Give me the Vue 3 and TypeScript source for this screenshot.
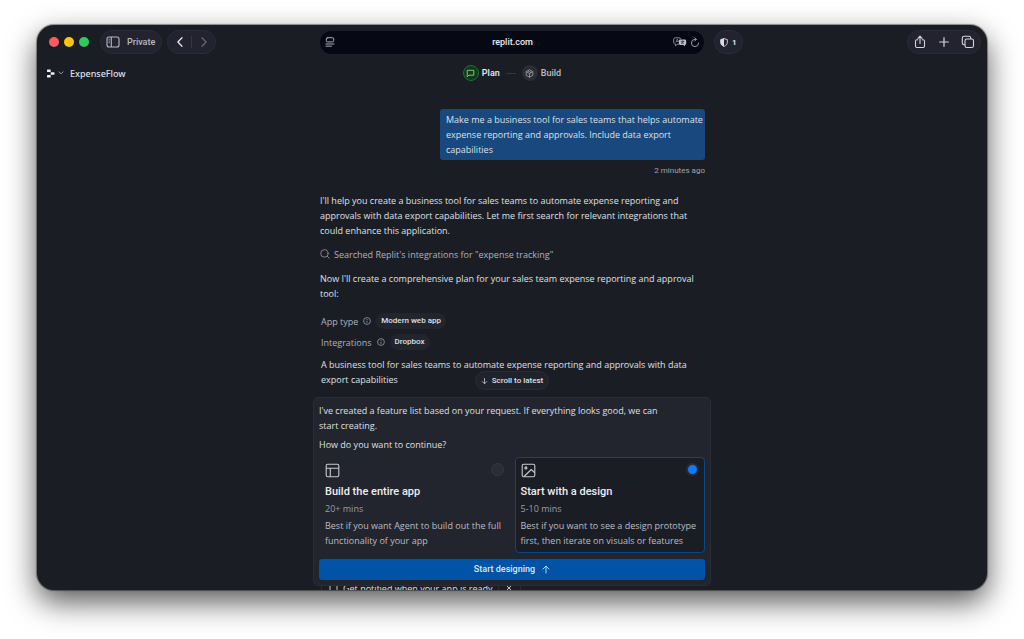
<script setup lang="ts">
import { ref } from 'vue'

interface Option {
  id: string
  title: string
  time: string
  text: string
}

const options: Option[] = [
  {
    id: 'app',
    title: 'Build the entire app',
    time: '20+ mins',
    text: 'Best if you want Agent to build out the full\nfunctionality of your app',
  },
  {
    id: 'design',
    title: 'Start with a design',
    time: '5-10 mins',
    text: 'Best if you want to see a design prototype\nfirst, then iterate on visuals or features',
  },
]
const choice = ref('design')

const facts = [
  { label: 'App type', value: 'Modern web app' },
  { label: 'Integrations', value: 'Dropbox' },
]

const request =
  'Make me a business tool for sales teams that helps automate\nexpense reporting and approvals. Include data export\ncapabilities'
const intro =
  "I'll help you create a business tool for sales teams to automate expense reporting and\napprovals with data export capabilities. Let me first search for relevant integrations that\ncould enhance this application."
const plan =
  "Now I'll create a comprehensive plan for your sales team expense reporting and approval\ntool:"
const summary =
  'A business tool for sales teams to automate expense reporting and approvals with data\nexport capabilities'
const prompt =
  "I've created a feature list based on your request. If everything looks good, we can\nstart creating."
</script>

<template>
  <div class="desktop">
    <div class="window">
      <header class="toolbar">
        <div class="side">
          <div class="lights">
            <span class="light red"></span>
            <span class="light yellow"></span>
            <span class="light green"></span>
          </div>
          <button class="pill private" type="button">
            <svg width="14" height="12" viewBox="0 0 14 12" fill="none" stroke="#b9bac3" stroke-width="1.1">
              <rect x="1" y="1" width="12" height="10" rx="2" />
              <path d="M5.3 1v10M2.6 3.3h1.2M2.6 5h1.2M2.6 6.7h1.2" />
            </svg>
            Private
          </button>
          <div class="pill nav">
            <button type="button" aria-label="Back">
              <svg width="8" height="12" viewBox="0 0 8 12" fill="none" stroke="#e4e4ea" stroke-width="1.3" stroke-linecap="round" stroke-linejoin="round">
                <path d="M6 1.7 1.9 6 6 10.3" />
              </svg>
            </button>
            <span class="rule"></span>
            <button type="button" aria-label="Forward">
              <svg width="8" height="12" viewBox="0 0 8 12" fill="none" stroke="#62636f" stroke-width="1.3" stroke-linecap="round" stroke-linejoin="round">
                <path d="M2 1.7 6.1 6 2 10.3" />
              </svg>
            </button>
          </div>
        </div>

        <div class="address">
          <svg width="10" height="10" viewBox="0 0 10 10" fill="none" stroke="#a9abb5" stroke-linecap="round">
            <rect x="1.3" y=".7" width="7.4" height="4.2" rx="1.2" />
            <path d="M1 7h8M1 9.2h5.5" />
          </svg>
          <span class="host">replit.com</span>
          <span class="tools">
            <svg width="14" height="10" viewBox="0 0 14 10" fill="none">
              <path d="M6 7.2H4.2L2.6 8.8V7.2C1.3 7 .7 6.4 .7 5.3V2.8C.7 1.4 1.3 .8 2.7 .8h3.2c1 0 1.7 .4 1.9 1.2" stroke="#9a9ba4" stroke-width=".9" />
              <path d="M2.8 5.5 4.3 2.2l1.2 2.4M3.3 4.5h1.7" stroke="#9a9ba4" stroke-width=".7" />
              <path d="M7.5 2.4h4c1.1 0 1.7 .6 1.7 1.7v2.2c0 1.1-.5 1.6-1.4 1.7v1.6L10.2 8H7.5c-1.1 0-1.7-.6-1.7-1.7V4.1c0-1.1 .6-1.7 1.7-1.7z" fill="#bfc0c8" />
              <path d="M7.7 4.3h3.6M9.5 3.5v.8M8.1 6.8c1.3-.5 2.2-1.3 2.5-2.5M8.4 4.9c.5 1 1.3 1.6 2.3 1.9" stroke="#0a0c16" stroke-width=".6" />
            </svg>
            <svg width="10" height="11" viewBox="0 0 10 11" fill="none" stroke="#9a9ba4" stroke-linecap="round" stroke-linejoin="round">
              <path d="M8.6 6a3.6 3.6 0 1 1-3.6-3.6h1.2M4.7 .8l1.7 1.6-1.7 1.7" />
            </svg>
          </span>
        </div>

        <div class="side end">
          <button class="pill shield" type="button" aria-label="Privacy report, 1 tracker">
            <svg width="8" height="9" viewBox="0 0 8 9" fill="none">
              <path d="M4 .6 7.3 1.6v3.1C7.3 6.4 5.9 7.6 4 8.4 2.1 7.6 .7 6.4 .7 4.7V1.6z" stroke="#dcdde3" stroke-width=".9" />
              <path d="M4 .6v7.8C2.1 7.6 .7 6.4 .7 4.7V1.6z" fill="#dcdde3" />
            </svg>
            1
          </button>
          <div class="pill actions">
            <button type="button" aria-label="Share">
              <svg width="12" height="14" viewBox="0 0 12 14" fill="none" stroke="#d5d6dd" stroke-width="1.1" stroke-linecap="round" stroke-linejoin="round">
                <path d="M3.8 4.8H2.9c-.9 0-1.4 .5-1.4 1.4v4.9c0 .9 .5 1.4 1.4 1.4h6.2c.9 0 1.4-.5 1.4-1.4V6.2c0-.9-.5-1.4-1.4-1.4h-.9M6 8.5V1.3M3.9 3.3 6 1.2l2.1 2.1" />
              </svg>
            </button>
            <button type="button" aria-label="New tab">
              <svg width="12" height="12" viewBox="0 0 12 12" fill="none" stroke="#d5d6dd" stroke-width="1.2" stroke-linecap="round">
                <path d="M6 1.7v8.6M1.7 6h8.6" />
              </svg>
            </button>
            <button type="button" aria-label="Show tabs">
              <svg width="14" height="14" viewBox="0 0 14 14" fill="none" stroke="#d5d6dd" stroke-width="1.1" stroke-linejoin="round">
                <rect x="4" y="4" width="8.5" height="8.5" rx="1.8" />
                <path d="M4 9.7H3C2 9.7 1.3 9.1 1.3 8V3.2c0-1.2 .7-1.9 1.9-1.9H8c1.1 0 1.7 .7 1.7 1.7v1" />
              </svg>
            </button>
          </div>
        </div>
      </header>

      <div class="appbar">
        <button class="project" type="button">
          <svg width="8" height="9" viewBox="0 0 8 9" fill="#f0f1f4">
            <path d="M.6 .4h2.5c.4 0 .6 .2 .6 .6V3H.6C.2 3 0 2.8 0 2.4V1C0 .6 .2 .4 .6 .4zM3.7 3.2h3.2c.4 0 .6 .2 .6 .6v1.4c0 .4-.2 .6-.6 .6H3.7zM.6 6h3.1v2c0 .4-.2 .6-.6 .6H.6C.2 8.6 0 8.4 0 8V6.6C0 6.2 .2 6 .6 6z" />
          </svg>
          <svg class="caret" width="6" height="4" viewBox="0 0 6 4" fill="none" stroke="#9b9da6" stroke-linecap="round" stroke-linejoin="round">
            <path d="M1 .9l2 2 2-2" />
          </svg>
          ExpenseFlow
        </button>
        <nav class="steps">
          <span class="badge active">
            <svg width="9" height="9" viewBox="0 0 9 9" fill="none" stroke="#8fcf9a" stroke-linejoin="round" stroke-width=".9">
              <path d="M1.2 1.3h6.6v4.9H2.9L1.2 7.8z" />
            </svg>
          </span>
          <span class="step current">Plan</span>
          <span class="dash"></span>
          <span class="badge">
            <svg width="9" height="9" viewBox="0 0 9 9" fill="none" stroke="#a7a8af" stroke-linejoin="round" stroke-width=".8">
              <path d="M4.5 .8 7.8 2.6v3.8L4.5 8.2 1.2 6.4V2.6zM1.2 2.6l3.3 1.9 3.3-1.9M4.5 4.5v3.7M2.8 1.7l3.3 1.9" />
            </svg>
          </span>
          <span class="step">Build</span>
        </nav>
      </div>

      <main class="chat">
        <div class="thread">
          <div class="bubble">{{ request }}</div>
          <time class="ago">2 minutes ago</time>
          <p class="intro">{{ intro }}</p>
          <div class="search">
            <svg width="10" height="10" viewBox="0 0 10 10" fill="none" stroke="#8b8d96" stroke-width=".9" stroke-linecap="round">
              <circle cx="4.4" cy="4.4" r="3.7" />
              <path d="m7.2 7.2 2.1 2.1" />
            </svg>
            Searched Replit's integrations for "expense tracking"
          </div>
          <p class="plan">{{ plan }}</p>
          <div v-for="fact in facts" :key="fact.label" class="fact">
            <span>{{ fact.label }}</span>
            <svg width="8" height="8" viewBox="0 0 8 8" fill="none" stroke="#9b9da6" stroke-width=".8">
              <circle cx="4" cy="4" r="3.4" />
              <path d="M4 3.7v2.1M4 2v.9" />
            </svg>
            <span class="tag">{{ fact.value }}</span>
          </div>
          <p class="summary">{{ summary }}</p>
        </div>

        <div class="dock">
          <button class="latest" type="button">
            <svg width="7" height="8" viewBox="0 0 7 8" fill="none" stroke="#b9bac2" stroke-width=".9" stroke-linecap="round" stroke-linejoin="round">
              <path d="M3.5 1.5v5.2M1.3 4.6 3.5 6.8 5.7 4.6" />
            </svg>
            Scroll to latest
          </button>

          <form class="panel" @submit.prevent>
            <p class="prompt">{{ prompt }}</p>
            <p id="question" class="question">How do you want to continue?</p>
            <div class="options" role="radiogroup" aria-labelledby="question">
              <label v-for="option in options" :key="option.id" class="option" :class="{ selected: choice === option.id }">
                <span class="top">
                  <svg v-if="option.id === 'app'" width="15" height="15" viewBox="0 0 15 15" fill="none" stroke="#c9cad0" stroke-width="1.1">
                    <rect x="1.2" y="1.2" width="12.6" height="12.6" rx="1.5" />
                    <path d="M1.2 5.3h12.6M5.3 5.3v8.5" />
                  </svg>
                  <svg v-else width="15" height="15" viewBox="0 0 15 15" fill="none" stroke="#c9cad0" stroke-width="1.1" stroke-linejoin="round">
                    <rect x="1.2" y="1.2" width="12.6" height="12.6" rx="1.5" />
                    <circle cx="4.9" cy="4.9" r="1" />
                    <path d="m3 13.5 7.3-7 3.5 3.4" />
                  </svg>
                  <input v-model="choice" type="radio" name="mode" :value="option.id" />
                </span>
                <strong>{{ option.title }}</strong>
                <span class="time">{{ option.time }}</span>
                <span class="detail">{{ option.text }}</span>
              </label>
            </div>
            <button class="submit" type="submit">
              Start designing
              <svg width="8" height="9" viewBox="0 0 8 9" fill="none" stroke="#cfe0f3" stroke-width=".9" stroke-linecap="round" stroke-linejoin="round">
                <path d="M4 8V1.2M1 4l3-2.9L7 4" />
              </svg>
            </button>
          </form>

          <div class="peek">
            <div class="notice">
              <svg width="9" height="10" viewBox="0 0 9 10" fill="none" stroke="#c5c6cc">
                <rect x="1" y=".5" width="7" height="7" rx="1" />
              </svg>
              <span>Get notified when your app is ready</span>
              <button type="button" aria-label="Dismiss">
                <svg width="8" height="8" viewBox="0 0 8 8" stroke="#c5c6cc" stroke-linecap="round">
                  <path d="m1 1 6 6M7 1 1 7" />
                </svg>
              </button>
            </div>
          </div>
        </div>
      </main>
    </div>
  </div>
</template>

<style>
body {
  margin: 0;
  background: #fff;
}
</style>

<style scoped>
* {
  box-sizing: border-box;
}
svg {
  display: block;
  flex: none;
}
p {
  margin: 0;
}
button {
  font: inherit;
  color: inherit;
  background: none;
  border: 0;
  padding: 0;
  display: flex;
  align-items: center;
  justify-content: center;
}
.desktop {
  height: 100vh;
  padding: 25px 37px 49px;
  display: flex;
  background: #fff;
  overflow: hidden;
  font: 500 9px/15px Roboto, "Liberation Sans", sans-serif;
  color: #dfe0e5;
}
.window {
  flex: 1;
  min-width: 0;
  display: flex;
  flex-direction: column;
  background: #1b1d25;
  border-radius: 17px;
  overflow: hidden;
  box-shadow: 0 0 1px 1px rgba(0, 0, 0, 0.4), 0 12px 30px rgba(0, 0, 0, 0.66);
}
.toolbar {
  display: grid;
  grid-template-columns: 1fr 384px 1fr;
  align-items: center;
  padding: 5px 6px 0;
  flex: none;
}
.side {
  display: flex;
  align-items: center;
  gap: 5px;
}
.end {
  justify-content: space-between;
  padding-left: 10px;
}
.lights {
  display: flex;
  gap: 5px;
  padding: 0 6px;
}
.light {
  width: 10px;
  height: 10px;
  border-radius: 50%;
}
.red {
  background: #ff5a5f;
}
.yellow {
  background: #fec602;
}
.green {
  background: #30cb58;
}
.pill {
  height: 24px;
  border-radius: 12px;
  background: #22232e;
  border: 1px solid #2a2c39;
}
.private {
  padding: 0 6px 0 5px;
  gap: 7px;
  color: #b9bac3;
}
.nav {
  display: flex;
  align-items: center;
}
.nav button {
  width: 23px;
}
.rule {
  width: 1px;
  height: 12px;
  background: #343643;
}
.address {
  height: 23px;
  border-radius: 12px;
  background: #060814;
  display: grid;
  grid-template-columns: 1fr auto 1fr;
  align-items: center;
  padding: 0 4px 0 5px;
}
.host {
  color: #ececf1;
}
.tools {
  display: flex;
  justify-content: flex-end;
  align-items: center;
  gap: 3px;
}
.shield {
  padding: 0 5px;
  gap: 4px;
  font-size: 8px;
  font-weight: 700;
}
.actions {
  display: flex;
  align-items: center;
}
.actions button {
  width: 24px;
}
.appbar {
  display: grid;
  grid-template-columns: 1fr auto 1fr;
  align-items: center;
  height: 24px;
  margin-top: 7px;
  padding: 0 10px;
  flex: none;
}
.project {
  justify-self: start;
  font-family: "Noto Sans", sans-serif;
}
.caret {
  margin: 0 6px 0 3px;
}
.steps {
  display: flex;
  align-items: center;
}
.badge {
  width: 16px;
  height: 16px;
  border-radius: 50%;
  background: #2c2d33;
  display: grid;
  place-items: center;
}
.badge.active {
  background: #113819;
  border: 1px solid #137a20;
}
.step {
  margin-left: 3px;
  color: #bfc0c7;
}
.current {
  color: #eceef2;
}
.dash {
  width: 10px;
  height: 1px;
  margin: 0 6px;
  background: #34363f;
}
.chat {
  flex: 1;
  min-height: 0;
  position: relative;
  overflow: hidden;
  padding-top: 24px;
}
.thread {
  width: 386px;
  margin: 0 auto;
  padding-left: 1px;
  display: flex;
  flex-direction: column;
}
.bubble,
.intro,
.search,
.plan,
.fact,
.summary,
.prompt,
.question,
.time,
.detail,
.notice {
  font-family: "Open Sans", "Noto Sans", sans-serif;
  font-weight: 400;
}
.bubble {
  align-self: flex-end;
  width: 265px;
  padding: 3px 0 3px 6px;
  border-radius: 3px;
  background: #18487d;
  white-space: pre;
}
.ago {
  align-self: flex-end;
  margin-top: 3px;
  font-size: 8px;
  font-weight: 400;
  color: #a2a4ac;
}
.intro,
.plan,
.summary,
.prompt,
.detail {
  white-space: pre;
}
.intro {
  margin-top: 15px;
}
.search {
  display: flex;
  align-items: center;
  gap: 4px;
  margin-top: 8px;
  height: 16px;
  color: #b0b2ba;
}
.plan {
  margin: 9px 0 12px;
}
.fact {
  display: flex;
  align-items: center;
  gap: 5px;
  height: 16px;
  margin-bottom: 5px;
  padding-left: 1px;
  color: #b0b2ba;
}
.tag {
  height: 16px;
  padding: 0 5px;
  border-radius: 8px;
  background: #22242e;
  color: #dfe0e5;
  font: 500 8px/16px Roboto, "Liberation Sans", sans-serif;
}
.summary {
  margin-top: 2px;
  padding-left: 1px;
}
.dock {
  position: absolute;
  left: 0;
  right: 0;
  bottom: 0;
  width: 398px;
  margin: 0 auto;
  display: flex;
  flex-direction: column;
}
.latest {
  align-self: center;
  height: 19px;
  margin-bottom: 7px;
  padding: 0 5px;
  gap: 4px;
  border: 1px solid #292b36;
  border-radius: 10px;
  background: #20222c;
  font-size: 8px;
}
.panel {
  padding: 5px;
  border: 1px solid #2a2c36;
  border-radius: 5px;
  background: #22242e;
}
.question {
  margin: 4px 0 5px;
}
.options {
  display: grid;
  grid-template-columns: 1fr 1fr;
  gap: 5px;
}
.option {
  display: flex;
  flex-direction: column;
  padding: 5px 5px 4px;
  border: 1px solid transparent;
  border-radius: 4px;
}
.selected {
  background: #1b1d25;
  border-color: #0f4580;
}
.top {
  display: flex;
  justify-content: space-between;
  margin-bottom: 6px;
}
.option input {
  appearance: none;
  width: 13px;
  height: 13px;
  margin: 0;
  border-radius: 50%;
  border: 1px solid #363843;
  background: #2a2c36;
}
.option input:checked {
  border: 2px solid #2a2c38;
  background: #0a7cff;
}
.option strong {
  font-size: 11px;
  font-weight: 500;
  color: #eeeff3;
}
.time {
  margin: 2px 0;
  color: #9b9da6;
}
.detail {
  color: #bbbdc4;
}
.submit {
  width: 100%;
  height: 21px;
  margin-top: 6px;
  gap: 7px;
  border-radius: 3px;
  background: #0053a6;
  color: #dce8f6;
}
.peek {
  height: 4px;
  margin-left: 8px;
  display: flex;
  align-items: center;
  overflow: hidden;
}
.notice {
  display: flex;
  align-items: center;
  height: 18px;
  padding-left: 7px;
  gap: 5px;
  border: 1px solid #2a2c36;
  border-radius: 4px;
}
.notice button {
  width: 22px;
  height: 16px;
  border-left: 1px solid #2a2c36;
}
</style>
